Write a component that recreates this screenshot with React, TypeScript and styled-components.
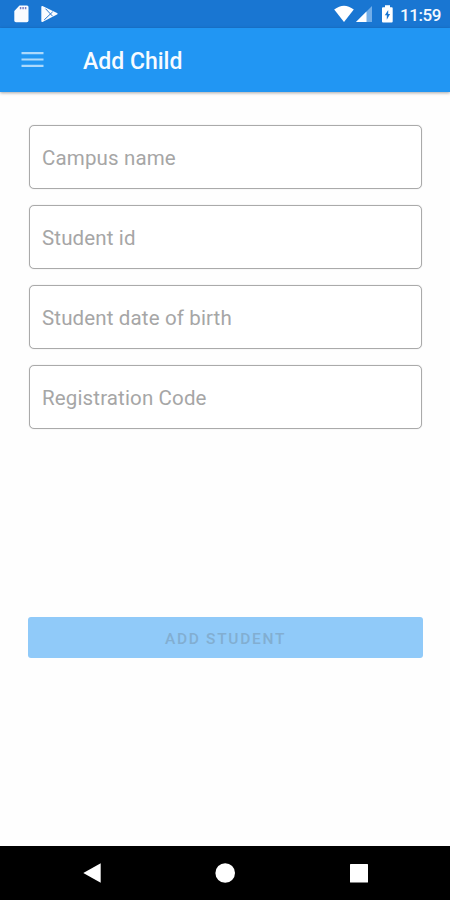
import React from 'react';
import styled, { createGlobalStyle } from 'styled-components';

const GlobalStyle = createGlobalStyle`
  * { box-sizing: border-box; }
  body { margin: 0; background: #fefefe; }
`;

const Screen = styled.div`
  display: flex;
  flex-direction: column;
  width: 450px;
  height: 900px;
  overflow: hidden;
  background: #fefefe;
  font-family: Roboto, "Noto Sans", sans-serif;
`;

const StatusBar = styled.div`
  display: flex;
  align-items: center;
  justify-content: space-between;
  flex: none;
  height: 28px;
  padding: 0 8px 0 14px;
  background: #1976d2;
`;

const StatusIcons = styled.div<{ $gap: number }>`
  display: flex;
  align-items: center;
  gap: ${({ $gap }) => $gap}px;
  svg { display: block; }
`;

const Clock = styled.span`
  width: 42px;
  margin-left: 5px;
  color: #f4f9ff;
  font-size: 17px;
  font-weight: 500;
  line-height: 28px;
  letter-spacing: -0.4px;
  padding-top: 2px;
  white-space: nowrap;
`;

const AppBar = styled.header`
  display: flex;
  align-items: center;
  flex: none;
  height: 64px;
  padding-left: 21px;
  background: #2196f3;
  box-shadow: 0 1px 3px rgba(0, 0, 0, 0.35);
`;

const MenuButton = styled.button`
  width: 23px;
  height: 18px;
  padding: 0;
  border: 0;
  background: none;
  svg { display: block; }
`;

const Title = styled.h1`
  margin: 4px 0 0 39px;
  color: #f7fbff;
  font-size: 23px;
  font-weight: 500;
  line-height: 30px;
`;

const Form = styled.form`
  display: flex;
  flex: 1;
  flex-direction: column;
  padding: 32.5px 28px 0 29px;
`;

const Fields = styled.div`
  display: grid;
  grid-auto-rows: 64px;
  gap: 16px;
`;

const Field = styled.input`
  width: 100%;
  height: 64px;
  padding: 3px 12px 0;
  border: 1px solid #aaa;
  border-radius: 5px;
  outline: 0;
  background: #fff;
  box-shadow: 0 0 1px rgba(0, 0, 0, 0.25);
  font: 400 20.5px Roboto, "Noto Sans", sans-serif;
  letter-spacing: 0.14px;
  &::placeholder { color: #a6a6a6; opacity: 1; }
`;

const SubmitButton = styled.button`
  height: 41px;
  margin: 188.5px -1px 0;
  padding: 2px 0 0;
  border: 0;
  border-radius: 3px;
  background: #90caf9;
  color: #82aed1;
  font: 500 15.5px Roboto, "Noto Sans", sans-serif;
  letter-spacing: 1.7px;
`;

const NavigationBar = styled.nav`
  display: flex;
  align-items: center;
  justify-content: space-between;
  flex: none;
  height: 54px;
  padding: 0 82px 0 83px;
  background: #000;
  svg { display: block; }
`;

const labels = ['Campus name', 'Student id', 'Student date of birth', 'Registration Code'];

export default function App() {
  return (
    <>
      <GlobalStyle />
      <Screen>
        <StatusBar>
          <StatusIcons $gap={12}>
            <svg width="15" height="18" viewBox="0 0 15 18">
              <path fill="#fafcff" d="M5.5.5H13Q14.5.5 14.5 2v13.5q0 1.8-1.8 1.8H2Q.3 17.3.3 15.5V6Z" />
              <path stroke="#777fc4" strokeWidth="1.5" d="M6.6 2v2.3M9.1 2v2.3M11.6 2v2.3" />
            </svg>
            <svg width="17" height="18" viewBox="0 0 17 18">
              <path fill="#fafcff" d="M.3 2Q.3.8 1.5 1.1L16 8q1.2.7 0 1.5L1.5 16.9Q.3 17.2.3 16Z" />
              <path fill="none" stroke="#2878cf" strokeWidth="1" d="m4.5 3.7 7.2 7.6M3.2 14.9l8.5-8.1" />
            </svg>
          </StatusIcons>
          <StatusIcons $gap={2}>
            <svg width="20" height="18" viewBox="0 0 20 18">
              <path fill="#fff" d="M.2 4.5Q10-3.2 19.8 4.5L10 17Z" />
            </svg>
            <svg width="17" height="18" viewBox="0 0 17 18">
              <path fill="#72aee9" d="M16 1v16H0Z" />
              <path fill="#fff" d="M10.5 6.5V17H0Z" />
            </svg>
            <svg width="18" height="18" viewBox="2 0 18 18">
              <path fill="#fff" d="M12 .3h5v2h1.7q1 0 1 1v13.2q0 1-1 1H10q-1 0-1-1V3.3q0-1 1-1h2Z" />
              <path fill="#1976d2" d="m15.2 5-3.4 5.3h2v4.5l3.3-5.7h-1.9Z" />
            </svg>
            <Clock>11:59</Clock>
          </StatusIcons>
        </StatusBar>
        <AppBar>
          <MenuButton aria-label="Menu">
            <svg width="23" height="18" viewBox="0 0 23 18">
              <path stroke="#acd9fc" strokeWidth="2.2" d="M.5 2.1h22M.5 8.5h22M.5 14.9h22" />
            </svg>
          </MenuButton>
          <Title>Add Child</Title>
        </AppBar>
        <Form>
          <Fields>
            {labels.map((label) => (
              <Field key={label} placeholder={label} aria-label={label} />
            ))}
          </Fields>
          <SubmitButton type="button" disabled>ADD STUDENT</SubmitButton>
        </Form>
        <NavigationBar>
          <svg width="18" height="20" viewBox="0 0 18 20">
            <path fill="#fff" d="M.3 10 17.7.3v19.4Z" />
          </svg>
          <svg width="21" height="20" viewBox="0 0 21 20">
            <circle cx="10.2" cy="10" r="9.8" fill="#fff" />
          </svg>
          <svg width="18" height="20" viewBox="0 0 18 20">
            <rect y="1" width="18" height="18.5" rx=".5" fill="#fff" />
          </svg>
        </NavigationBar>
      </Screen>
    </>
  );
}
